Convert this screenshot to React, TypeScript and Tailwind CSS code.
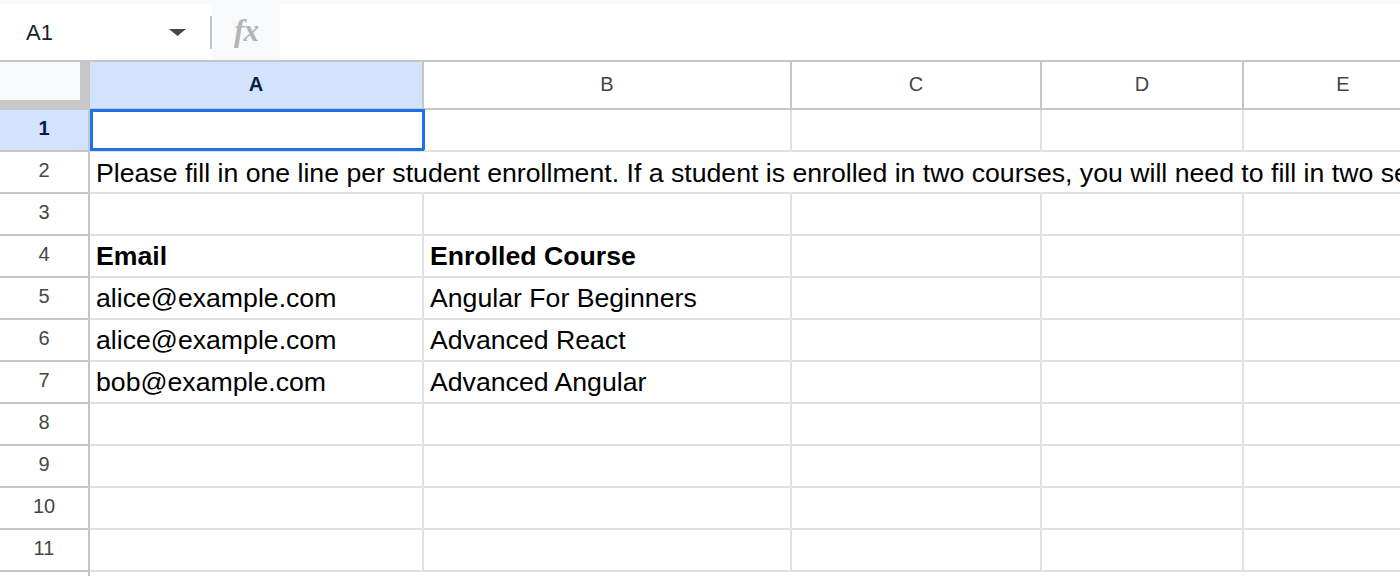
import React from 'react';

const cols = [
  { key: 'A', w: 'w-[334px]' },
  { key: 'B', w: 'w-[368px]' },
  { key: 'C', w: 'w-[250px]' },
  { key: 'D', w: 'w-[202px]' },
  { key: 'E', w: 'w-[200px]' },
];

const rows: Record<number, string[]> = {
  4: ['Email', 'Enrolled Course'],
  5: ['alice@example.com', 'Angular For Beginners'],
  6: ['alice@example.com', 'Advanced React'],
  7: ['bob@example.com', 'Advanced Angular'],
};

const font = { fontFamily: '"Liberation Sans", Arial, sans-serif' };

function RowHeader({ n }: { n: number }) {
  const selected = n === 1;
  return (
    <div
      className={`w-[90px] h-[42px] shrink-0 flex items-center justify-center pb-[4px] border-r-2 border-b-2 border-[#c4c7c5] text-[20px] ${
        selected ? 'bg-[#d3e3fd] text-[#041e49] font-bold' : 'bg-white text-[#444746]'
      }`}
    >
      {n}
    </div>
  );
}

function Row({ n }: { n: number }) {
  if (n === 2) {
    return (
      <div className="flex">
        <RowHeader n={n} />
        <div className="flex-1 h-[42px] border-b-2 border-[#e1e1e1] flex items-center pt-[1px] px-[6px] text-[26.67px] text-black whitespace-nowrap overflow-hidden">
          Please fill in one line per student enrollment. If a student is enrolled in two courses, you will need to fill in two separate lines.
        </div>
      </div>
    );
  }
  const data = rows[n] || [];
  return (
    <div className="flex">
      <RowHeader n={n} />
      {cols.map((c, i) => (
        <div
          key={c.key}
          className={`${c.w} shrink-0 h-[42px] relative border-r-2 border-b-2 border-[#e1e1e1] flex items-center pt-[0px] px-[6px] text-[26.67px] text-black whitespace-nowrap ${
            n === 4 ? 'font-bold' : ''
          }`}
        >
          {data[i] || ''}
          {n === 1 && i === 0 && (
            <div className="absolute top-[-1px] left-0 w-[335px] h-[42px] border-[3px] border-[#1a73e8]" />
          )}
        </div>
      ))}
    </div>
  );
}

export default function App() {
  return (
    <div className="w-[1400px] h-[576px] overflow-hidden bg-white" style={font}>
      {/* formula bar */}
      <div className="h-[4px] bg-[#f8f9fa]" />
      <div className="h-[56px] flex items-center">
        <div className="w-[210px] h-full flex items-center pl-[26px] pr-[24px] justify-between">
          <span className="text-[22px] text-[#1f1f1f] pt-[1px]">A1</span>
          <svg width="17" height="7" viewBox="0 0 17 7">
            <path d="M0 0 L17 0 L8.5 7 Z" fill="#444746" />
          </svg>
        </div>
        <div className="w-[2px] h-[33px] bg-[#c7c7c7]" />
        <div className="w-[68px] h-full bg-[#f8f9fa] flex items-center justify-center">
          <span
            className="text-[31px] italic font-bold text-[#b4b4b4] tracking-[-1px] pb-[2px]"
            style={{ fontFamily: '"Liberation Serif", "Times New Roman", serif' }}
          >
            fx
          </span>
        </div>
        <div className="flex-1" />
      </div>

      {/* column headers */}
      <div className="flex border-t-2 border-[#c4c7c5]">
        <div className="w-[90px] h-[48px] shrink-0 bg-[#c7c7c7]">
          <div className="w-[80px] h-[38px] bg-[#f8f9fa]" />
        </div>
        {cols.map((c, i) => (
          <div
            key={c.key}
            className={`${c.w} shrink-0 h-[48px] border-r-2 border-b-2 border-[#c4c7c5] flex items-center justify-center pb-[3px] text-[20px] ${
              i === 0 ? 'bg-[#d3e3fd] text-[#041e49] font-bold' : 'bg-white text-[#444746]'
            }`}
          >
            {c.key}
          </div>
        ))}
      </div>

      {[1, 2, 3, 4, 5, 6, 7, 8, 9, 10, 11].map((n) => (
        <Row key={n} n={n} />
      ))}
      <div className="flex h-[8px]">
        <div className="w-[90px] shrink-0 border-r-2 border-[#c4c7c5]" />
      </div>
    </div>
  );
}
